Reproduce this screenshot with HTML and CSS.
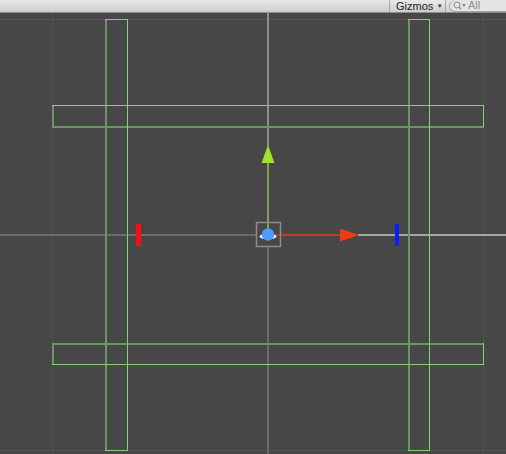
FILE: index.html
```html
<!DOCTYPE html>
<html>
<head>
<meta charset="utf-8">
<link rel="stylesheet" href="styles.css">
</head>
<body>
<div class="scene-view">
  <div class="toolbar">
    <div class="spacer"></div>
    <div class="gizmos"><span class="label">Gizmos</span><span class="caret">▾</span></div>
    <div class="search">
      <svg class="mag" width="14" height="9" viewBox="0 0 14 9">
        <circle cx="4" cy="4" r="3" fill="none" stroke="#8a8a8a" stroke-width="1"/>
        <line x1="6" y1="6" x2="8" y2="8" stroke="#8a8a8a" stroke-width="1.2"/>
        <polygon points="9,3 13,3 11,6" fill="#8a8a8a"/>
      </svg>
      <span class="ph">All</span>
    </div>
  </div>
  <svg class="canvas" width="506" height="441" viewBox="0 13 506 441">
    <rect x="0" y="13" width="506" height="441" fill="#474747"/>
    <g shape-rendering="crispEdges">
      <!-- grid -->
      <line x1="52.5" y1="13" x2="52.5" y2="454" stroke="#525252" stroke-width="1"/>
      <line x1="483.5" y1="13" x2="483.5" y2="454" stroke="#525252" stroke-width="1"/>
      <line x1="0" y1="19.5" x2="506" y2="19.5" stroke="#525252" stroke-width="1"/>
      <line x1="0" y1="450.5" x2="506" y2="450.5" stroke="#525252" stroke-width="1"/>
      <!-- axes -->
      <line x1="268" y1="13" x2="268" y2="146" stroke="#8e8e8e" stroke-width="2"/>
      <line x1="268" y1="247" x2="268" y2="454" stroke="#6a6a6a" stroke-width="2"/>
      <line x1="0" y1="235" x2="256" y2="235" stroke="#6a6a6a" stroke-width="2"/>
      <line x1="358" y1="235" x2="506" y2="235" stroke="#a6a6a6" stroke-width="2"/>

      <!-- dark (hidden) edges -->
      <line x1="106" y1="19" x2="106" y2="451" stroke="#6a9862" stroke-width="2"/>
      <line x1="409" y1="19" x2="409" y2="451" stroke="#6a9862" stroke-width="2"/>
      <line x1="52" y1="127" x2="484" y2="127" stroke="#6a9862" stroke-width="2"/>
      <line x1="53" y1="105" x2="53" y2="127" stroke="#6a9862" stroke-width="2"/>
      <line x1="52" y1="344" x2="484" y2="344" stroke="#6a9862" stroke-width="2"/>
      <line x1="53" y1="343" x2="53" y2="365" stroke="#6a9862" stroke-width="2"/>

      <!-- light (visible) edges -->
      <line x1="127.5" y1="19" x2="127.5" y2="451" stroke="#86d078" stroke-width="1"/>
      <line x1="105" y1="19.5" x2="128" y2="19.5" stroke="#86d078" stroke-width="1"/>
      <line x1="105" y1="450.5" x2="128" y2="450.5" stroke="#86d078" stroke-width="1"/>
      <line x1="429.5" y1="19" x2="429.5" y2="451" stroke="#86d078" stroke-width="1"/>
      <line x1="408" y1="19.5" x2="430" y2="19.5" stroke="#86d078" stroke-width="1"/>
      <line x1="408" y1="450.5" x2="430" y2="450.5" stroke="#86d078" stroke-width="1"/>
      <line x1="52" y1="105.5" x2="484" y2="105.5" stroke="#86d078" stroke-width="1"/>
      <line x1="483.5" y1="105" x2="483.5" y2="127" stroke="#86d078" stroke-width="1"/>
      <line x1="52" y1="364.5" x2="484" y2="364.5" stroke="#86d078" stroke-width="1"/>
      <line x1="483.5" y1="343" x2="483.5" y2="365" stroke="#86d078" stroke-width="1"/>

      <!-- axis handle lines -->
      <line x1="268" y1="162" x2="268" y2="229" stroke="#7f9f58" stroke-width="2"/>
      <line x1="274" y1="235" x2="341" y2="235" stroke="#b3412c" stroke-width="1.5"/>

      <!-- scale handles -->
      <rect x="136" y="224" width="5" height="22" fill="#ff0b0b"/>
      <rect x="395" y="224" width="4" height="22" fill="#0b1cff"/>
    </g>
    <!-- arrows -->
    <polygon points="268,145 274.5,163 261.5,163" fill="#9fe22c"/>
    <polygon points="359,235 340,228.5 340,241.5" fill="#ef3b11"/>
    <!-- centre -->
    <rect x="256.5" y="222.5" width="24" height="24" fill="none" stroke="#8c8c8c" stroke-width="1.5"/>
    <ellipse cx="268" cy="236.5" rx="8.5" ry="2.8" fill="#ffffff"/>
    <circle cx="268" cy="234.5" r="6.2" fill="#4a9cff"/>
  </svg>
</div>
</body>
</html>
```

FILE: styles.css
```css
html, body {
  margin: 0;
  padding: 0;
  width: 506px;
  height: 454px;
  overflow: hidden;
  background: #474747;
}

.scene-view {
  display: flex;
  flex-direction: column;
  width: 506px;
  height: 454px;
}

.toolbar {
  display: flex;
  align-items: stretch;
  height: 12px;
  background: linear-gradient(#e9e9e9, #cdcdcd);
  border-bottom: 1px solid #8c8c8c;
  font-family: "Liberation Sans", "DejaVu Sans", sans-serif;
  font-size: 11px;
  color: #1e1e1e;
  overflow: hidden;
}

.spacer {
  flex: 1;
}

.gizmos {
  display: flex;
  align-items: center;
  width: 49px;
  padding-left: 6px;
  border-left: 1px solid #a8a8a8;
  border-right: 1px solid #a8a8a8;
  line-height: 12px;
  white-space: nowrap;
}

.label {
  width: 42px;
}

.caret {
  font-size: 7px;
  color: #333;
}

.search {
  display: flex;
  align-items: center;
  gap: 1px;
  margin-left: 3px;
  width: 53px;
  padding-left: 3px;
  border: 1px solid #a4a4a4;
  border-right: none;
  border-top: none;
  border-radius: 7px 0 0 7px;
  background: #e4e4e4;
}

.mag {
  display: block;
}

.ph {
  color: #8e8e8e;
  font-size: 11px;
  line-height: 11px;
}

.canvas {
  display: block;
  flex: none;
}
```
